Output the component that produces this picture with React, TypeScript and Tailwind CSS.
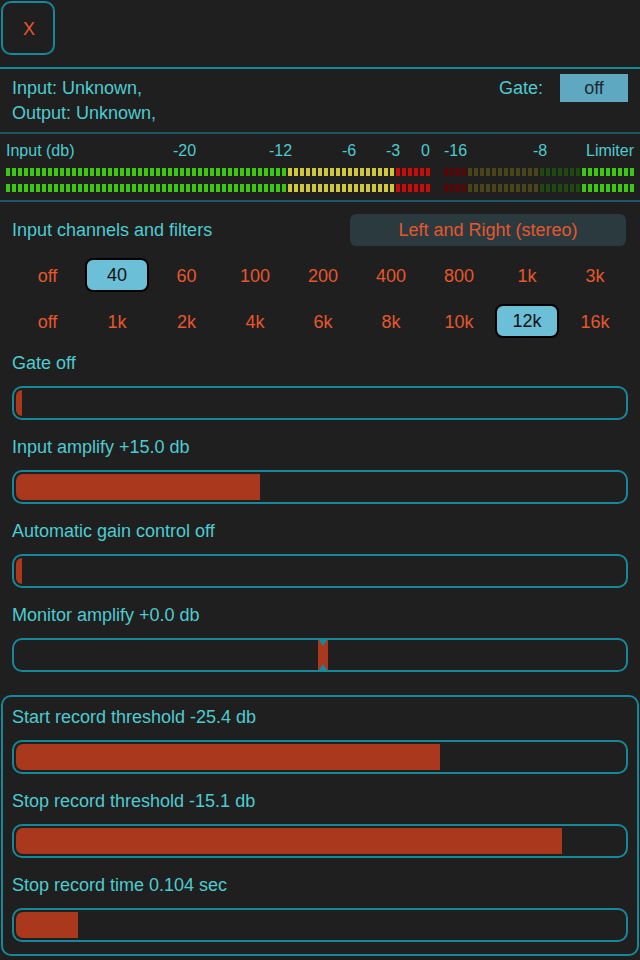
import React from "react";

const seg = (cls: string, n: number) => Array.from({ length: n }, () => cls);
const LEFT = [
  ...seg("bg-[#3ec80d]", 47),
  ...seg("bg-[#cec63b]", 18),
  ...seg("bg-[#cc0a0a]", 6),
];
const RIGHT = [
  ...seg("bg-[#560606]", 4),
  ...seg("bg-[#4a4519]", 12),
  ...seg("bg-[#1e4a12]", 7),
  ...seg("bg-[#3ec80d]", 9),
];

function MeterRow() {
  return (
    <div className="flex h-[8px] pl-[6px]">
      <div className="flex gap-[2px]">
        {LEFT.map((c, i) => (
          <div key={i} className={`h-full w-[4px] ${c}`} />
        ))}
      </div>
      <div className="ml-[14px] flex gap-[2px]">
        {RIGHT.map((c, i) => (
          <div key={i} className={`h-full w-[4px] ${c}`} />
        ))}
      </div>
    </div>
  );
}

const SCALE: [string, string][] = [
  ["Input (db)", "left-[6px]"],
  ["-20", "left-[173px]"],
  ["-12", "left-[269px]"],
  ["-6", "left-[342px]"],
  ["-3", "left-[386px]"],
  ["0", "left-[421px]"],
  ["-16", "left-[444px]"],
  ["-8", "left-[533px]"],
  ["Limiter", "left-[586px]"],
];

function Slider({ label, fill, center }: { label: string; fill: number; center?: boolean }) {
  return (
    <div className="flex flex-col gap-3">
      <div className="h-6 pt-[1px] text-[18px] leading-6 text-[#4ecbd0]">{label}</div>
      <div className="relative h-[34px] rounded-[10px] border-2 border-[#17889a] p-[2px]">
        {!center && <div className="h-full rounded-l-[7px] bg-[#a9381c]" style={{ width: fill }} />}
        {center && (
          <svg
            className="absolute left-[304px] top-0 h-[30px] w-[10px]"
            viewBox="0 0 10 30"
            preserveAspectRatio="none"
          >
            <rect x="0" y="0" width="10" height="30" fill="#a9381c" />
            <polygon points="1,0 9,0 5,6" fill="#17889a" />
            <polygon points="1,30 9,30 5,24" fill="#17889a" />
          </svg>
        )}
      </div>
    </div>
  );
}

const ROW1 = ["off", "40", "60", "100", "200", "400", "800", "1k", "3k"];
const ROW2 = ["off", "1k", "2k", "4k", "6k", "8k", "10k", "12k", "16k"];

function FilterRow({ items, sel }: { items: string[]; sel: number }) {
  return (
    <div className="grid h-[34px] grid-cols-[69px_70px_69px_68px_68px_68px_68px_68px_68px] pl-[13px]">
      {items.map((t, i) => (
        <div key={i} className="flex items-center justify-center">
          {i === sel ? (
            <div className="flex h-[34px] w-[64px] items-center justify-center rounded-[8px] border-2 border-black bg-[#6bbfd6] text-[18px] text-[#111]">
              {t}
            </div>
          ) : (
            <span className="pt-[2px] text-[18px] text-[#e5572d]">{t}</span>
          )}
        </div>
      ))}
    </div>
  );
}

export default function App() {
  return (
    <div
      className="h-[960px] w-[640px] overflow-hidden bg-[#1f1f1f]"
      style={{ fontFamily: '"Liberation Sans", Arial, sans-serif' }}
    >
      {/* header */}
      <div className="h-[69px] border-b-2 border-[#17889a] pl-[1px] pt-[1px]">
        <div className="flex h-[54px] w-[54px] items-center justify-center rounded-[10px] border-2 border-[#17889a] pl-[2px] pt-[3px] text-[18px] text-[#e5572d]">
          X
        </div>
      </div>

      {/* info */}
      <div className="flex h-[65px] justify-between border-b-2 border-[#1b5864] pl-3 pr-3">
        <div className="pt-[7px] text-[18px] leading-[25px] text-[#4ecbd0]">
          <div>Input: Unknown,</div>
          <div>Output: Unknown,</div>
        </div>
        <div className="flex items-start gap-[17px] pt-[5px]">
          <span className="text-[18px] leading-[28px] text-[#4ecbd0]">Gate:</span>
          <div className="flex h-[28px] w-[68px] items-center justify-center bg-[#5ea9c1] text-[18px] text-[#1c2a30]">
            off
          </div>
        </div>
      </div>

      {/* meters */}
      <div className="h-[68px] border-b-2 border-[#1b5864] pt-[8px]">
        <div className="relative h-[18px] text-[16px] leading-[18px] text-[#4ecbd0]">
          {SCALE.map(([t, c]) => (
            <span key={t} className={`absolute top-0 ${c}`}>
              {t}
            </span>
          ))}
        </div>
        <div className="mt-[8px] flex flex-col gap-[8px]">
          <MeterRow />
          <MeterRow />
        </div>
      </div>

      {/* channels */}
      <div className="mt-3 flex h-[32px] items-center justify-between pl-3 pr-[14px]">
        <span className="text-[18px] text-[#4ecbd0]">Input channels and filters</span>
        <div className="flex h-[32px] w-[276px] items-center justify-center rounded-[6px] bg-[#2a3a3f] text-[18px] text-[#e5572d]">
          Left and Right (stereo)
        </div>
      </div>
      <div className="mt-3 flex flex-col gap-3">
        <FilterRow items={ROW1} sel={1} />
        <FilterRow items={ROW2} sel={7} />
      </div>

      {/* sliders */}
      <div className="mt-3 flex flex-col gap-[14px] px-3">
        <Slider label="Gate off" fill={6} />
        <Slider label="Input amplify +15.0 db" fill={244} />
        <Slider label="Automatic gain control off" fill={6} />
        <Slider label="Monitor amplify +0.0 db" fill={0} center />
      </div>

      {/* record box */}
      <div className="mx-[1px] mt-[23px] flex flex-col gap-[14px] rounded-[10px] border-2 border-[#17889a] pb-[12px] pl-[9px] pr-[9px] pt-[7px]">
        <Slider label="Start record threshold -25.4 db" fill={424} />
        <Slider label="Stop record threshold -15.1 db" fill={546} />
        <Slider label="Stop record time 0.104 sec" fill={62} />
      </div>
    </div>
  );
}
